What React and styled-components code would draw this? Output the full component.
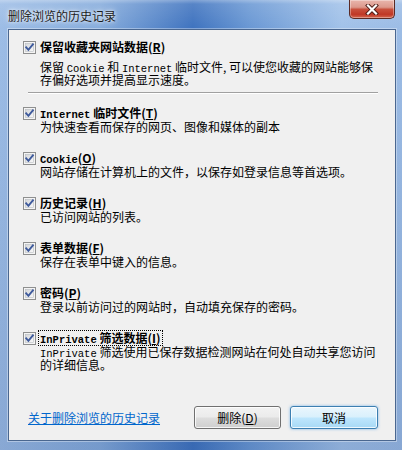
import React from 'react';
import styled, { createGlobalStyle } from 'styled-components';

const Global = createGlobalStyle`
  html, body { margin: 0; padding: 0; background: #6f9bd3; }
  body { font-family: "Noto Sans CJK SC", "Liberation Sans", sans-serif; }
`;

const Window = styled.div`
  width: 402px;
  height: 450px;
  box-sizing: border-box;
  display: flex;
  flex-direction: column;
  padding: 0 6px 9px 8px;
  overflow: hidden;
  background:
    linear-gradient(to bottom, rgba(255,255,255,0.35) 0px, rgba(255,255,255,0.12) 4px, rgba(255,255,255,0) 28px, rgba(20,50,110,0.15) 100%),
    linear-gradient(to right, #9dbde6 0%, #86acdc 25%, #3f73bf 48%, #6a98d4 62%, #a2c2e9 85%, #9cbce5 100%);
`;

const TitleBar = styled.div`
  height: 29px;
  display: flex;
  justify-content: space-between;
  flex-shrink: 0;
`;

const Title = styled.div`
  align-self: center;
  font-size: 12px;
  color: #1b1b1b;
  line-height: 14px;
  margin-top: 2px;
  text-shadow: 0 0 6px rgba(255,255,255,0.9), 0 0 3px rgba(255,255,255,0.8);
`;

const CloseButton = styled.div`
  width: 46px;
  height: 19px;
  margin-right: 1px;
  box-sizing: border-box;
  border: 1px solid #5a2a24;
  border-top: none;
  border-radius: 0 0 5px 5px;
  background: linear-gradient(to bottom, #e9b6ad 0%, #dc998c 40%, #c8503d 52%, #c03826 80%, #d3674f 100%);
  box-shadow: inset 0 0 0 1px rgba(255,255,255,0.35);
  display: flex;
  align-items: center;
  justify-content: center;
`;

const Client = styled.div`
  flex: 1;
  display: flex;
  flex-direction: column;
  background: #f0f0f0;
  border: 1px solid #4a6790;
  box-shadow: 0 0 0 1px rgba(255,255,255,0.35);
  padding: 10px 17px 11px 14px;
`;

const Item = styled.div`
  display: flex;
  flex-direction: column;
  margin-top: ${(p) => p.$gap || 0}px;
`;

const Header = styled.div`
  display: flex;
  align-items: center;
  height: 14px;
  gap: 4px;
`;

const Label = styled.span`
  font-size: 12px;
  font-weight: bold;
  line-height: 14px;
  height: 14px;
  color: #000;
  white-space: nowrap;
  padding: 0 1px;
  margin-left: -1px;
  outline: ${(p) => (p.$focus ? '1px dotted #000' : 'none')};
  outline-offset: 0px;
`;

const Desc = styled.div`
  margin-left: 17px;
  margin-top: ${(p) => p.$gap || 0}px;
  font-size: 12px;
  line-height: 13px;
  color: #000;
`;

const Line = styled.div`
  white-space: nowrap;
  height: 13px;
`;

const Mono = styled.span`
  font-family: "Liberation Mono", "DejaVu Sans Mono", monospace;
  font-size: 10.5px;
  line-height: 9px;
`;

const Separator = styled.div`
  height: 1px;
  background: #a0a0a0;
  border-bottom: 1px solid #fff;
  margin: 6px 0 12px 5px;
`;

const Footer = styled.div`
  margin-top: auto;
  display: flex;
  align-items: center;
  height: 23px;
`;

const Link = styled.a`
  margin-left: 5px;
  font-size: 12px;
  color: #0066cc;
  text-decoration: underline;
  cursor: pointer;
  margin-right: auto;
`;

const Button = styled.button`
  height: 23px;
  width: ${(p) => p.$w}px;
  margin-left: ${(p) => p.$ml || 0}px;
  box-sizing: border-box;
  font-family: "Noto Sans CJK SC", sans-serif;
  font-size: 12px;
  color: #000;
  padding: 0;
  border-radius: 3px;
  border: 1px solid ${(p) => (p.$default ? '#3c7fb1' : '#707070')};
  background: ${(p) =>
    p.$default
      ? 'linear-gradient(to bottom, #eaf6fd 0%, #d9f0fc 48%, #bee6fd 52%, #a7d9f5 100%)'
      : 'linear-gradient(to bottom, #f2f2f2 0%, #ebebeb 48%, #dddddd 52%, #cfcfcf 100%)'};
  box-shadow: inset 0 0 0 1px rgba(255,255,255,0.8)${(p) => (p.$default ? ', 0 0 3px rgba(80,160,230,0.7)' : '')};
`;

const CheckBox = () => (
  <svg width="13" height="13" viewBox="0 0 13 13" style={{ flexShrink: 0 }}>
    <defs>
      <linearGradient id="cbg" x1="0" y1="0" x2="1" y2="1">
        <stop offset="0" stopColor="#d4d6d9" />
        <stop offset="1" stopColor="#f9f9f9" />
      </linearGradient>
    </defs>
    <rect x="0.5" y="0.5" width="12" height="12" fill="#f4f4f4" stroke="#8e8f8f" />
    <rect x="2.5" y="2.5" width="8" height="8" fill="url(#cbg)" stroke="#b8bcc2" strokeWidth="0.6" />
    <path d="M3.2 6.3 L5.4 8.8 L9.9 3.3" fill="none" stroke="#3e5a9c" strokeWidth="1.9" strokeLinecap="square" />
  </svg>
);

const CloseX = () => (
  <svg width="14" height="11" viewBox="0 0 14 11">
    <path d="M3 1.5 L11 9.5 M11 1.5 L3 9.5" stroke="#4a1a14" strokeWidth="4" strokeLinecap="square" />
    <path d="M3 1.5 L11 9.5 M11 1.5 L3 9.5" stroke="#fff" strokeWidth="2.2" strokeLinecap="square" />
  </svg>
);

const items = [
  {
    label: <>保留收藏夹网站数据(<u>R</u>)</>,
    lines: [
      <>保留 <Mono>Cookie</Mono> 和 <Mono>Internet</Mono> 临时文件, 可以使您收藏的网站能够保</>,
      <>存偏好选项并提高显示速度。</>,
    ],
    descGap: 6,
  },
  {
    label: <><Mono>Internet</Mono> 临时文件(<u>T</u>)</>,
    lines: [<>为快速查看而保存的网页、图像和媒体的副本</>],
  },
  {
    label: <><Mono>Cookie</Mono>(<u>O</u>)</>,
    lines: [<>网站存储在计算机上的文件，以保存如登录信息等首选项。</>],
  },
  {
    label: <>历史记录(<u>H</u>)</>,
    lines: [<>已访问网站的列表。</>],
  },
  {
    label: <>表单数据(<u>F</u>)</>,
    lines: [<>保存在表单中键入的信息。</>],
  },
  {
    label: <>密码(<u>P</u>)</>,
    lines: [<>登录以前访问过的网站时，自动填充保存的密码。</>],
  },
  {
    label: <><Mono>InPrivate</Mono> 筛选数据(<u>I</u>)</>,
    lines: [
      <><Mono>InPrivate</Mono> 筛选使用已保存数据检测网站在何处自动共享您访问</>,
      <>的详细信息。</>,
    ],
    focus: true,
  },
];

export default function App() {
  return (
    <>
      <Global />
      <Window>
        <TitleBar>
          <Title>删除浏览的历史记录</Title>
          <CloseButton>
            <CloseX />
          </CloseButton>
        </TitleBar>
        <Client>
          {items.map((it, i) => (
            <React.Fragment key={i}>
              <Item $gap={i > 1 ? 18 : 0}>
                <Header>
                  <CheckBox />
                  <Label $focus={it.focus}>{it.label}</Label>
                </Header>
                <Desc $gap={it.descGap || 0}>
                  {it.lines.map((l, j) => (
                    <Line key={j}>{l}</Line>
                  ))}
                </Desc>
              </Item>
              {i === 0 && <Separator />}
            </React.Fragment>
          ))}
          <Footer>
            <Link>关于删除浏览的历史记录</Link>
            <Button $w={87}>删除(<u>D</u>)</Button>
            <Button $w={88} $ml={9} $default>取消</Button>
          </Footer>
        </Client>
      </Window>
    </>
  );
}
